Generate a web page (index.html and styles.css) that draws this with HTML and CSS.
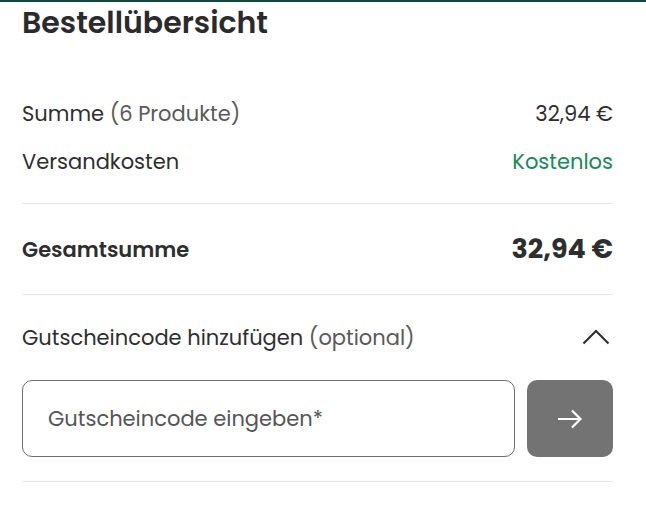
FILE: index.html
```html
<!DOCTYPE html>
<html lang="de">
<head>
    <meta charset="UTF-8">
    <meta name="viewport" content="width=device-width, initial-scale=1.0">
    <title>Bestellübersicht</title>
    <link rel="stylesheet" href="styles.css">
</head>
<body>
    <div class="summary">
        <h1 class="summary-title">Bestellübersicht</h1>

        <div class="summary-lines">
            <div class="line">
                <span>Summe <span class="muted">(6 Produkte)</span></span>
                <span>32,94 €</span>
            </div>
            <div class="line">
                <span>Versandkosten</span>
                <span class="free">Kostenlos</span>
            </div>
        </div>

        <div class="total">
            <span class="total-label">Gesamtsumme</span>
            <span class="total-value">32,94 €</span>
        </div>

        <div class="voucher">
            <div class="voucher-head">
                <span>Gutscheincode hinzufügen <span class="muted">(optional)</span></span>
                <svg class="chevron" width="28" height="16" viewBox="0 0 28 16" fill="none">
                    <path d="M1.5 14.5 L14 2 L26.5 14.5" stroke="#2b2b2b" stroke-width="2"/>
                </svg>
            </div>
            <form class="voucher-form" onsubmit="return false">
                <input type="text" class="voucher-input" placeholder="Gutscheincode eingeben*">
                <button type="submit" class="voucher-button" aria-label="Einlösen">
                    <svg width="26" height="20" viewBox="0 0 26 20" fill="none">
                        <path d="M1 10 H24 M15 1.5 L23.5 10 L15 18.5" stroke="#fff" stroke-width="2.2"/>
                    </svg>
                </button>
            </form>
        </div>
    </div>
</body>
</html>
```

FILE: styles.css
```css
body {
    margin: 0;
    padding: 0;
    font-family: "Poppins", "Open Sans", sans-serif;
    color: #2e2e2e;
    background-color: #fff;
    border-top: 2px solid #0b4a3c;
}

.summary {
    padding: 0 33px 0 22px;
}

.summary-title {
    margin: 1px 0 0;
    font-size: 30px;
    line-height: 40px;
    font-weight: 600;
    color: #2b2b2b;
}

.summary-lines {
    padding: 46px 0 18px;
    border-bottom: 1px solid #e6e6e6;
}

.line {
    display: flex;
    justify-content: space-between;
    align-items: center;
    height: 48px;
    font-size: 21px;
}

.muted {
    color: #5a5a5a;
}

.free {
    color: #168a57;
}

.total {
    display: flex;
    justify-content: space-between;
    align-items: center;
    height: 90px;
    border-bottom: 1px solid #e6e6e6;
}

.total-label {
    font-size: 21px;
    font-weight: 600;
}

.total-value {
    font-size: 27px;
    font-weight: 700;
}

.voucher {
    padding: 18px 0 24px;
    border-bottom: 1px solid #e6e6e6;
}

.voucher-head {
    display: flex;
    justify-content: space-between;
    align-items: center;
    height: 48px;
    font-size: 21px;
}

.chevron {
    margin-right: 3px;
}

.voucher-form {
    display: flex;
    gap: 12px;
    margin-top: 19px;
}

.voucher-input {
    flex: 1;
    height: 77px;
    box-sizing: border-box;
    padding: 0 25px;
    border: 1px solid #6e6e6e;
    border-radius: 10px;
    font-family: inherit;
    font-size: 21px;
    color: #333;
}

.voucher-input::placeholder {
    color: #555;
}

.voucher-button {
    width: 86px;
    height: 77px;
    border: none;
    border-radius: 10px;
    background-color: #737373;
    display: flex;
    align-items: center;
    justify-content: center;
    cursor: pointer;
}
```
